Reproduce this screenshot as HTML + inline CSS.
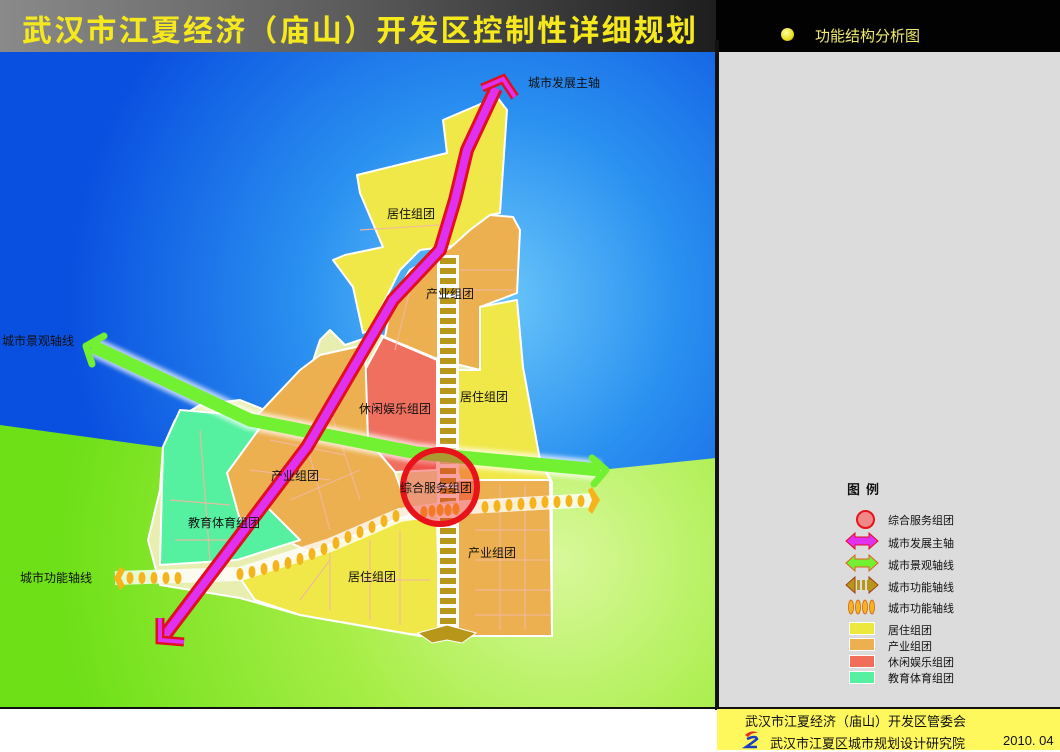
<!DOCTYPE html>
<html><head><meta charset="utf-8"><style>
*{margin:0;padding:0}
body{width:1060px;height:750px;overflow:hidden;background:#fff;font-family:"Liberation Sans","Noto Sans CJK SC",sans-serif;position:relative}
.hdr{position:absolute;left:0;top:0;width:716px;height:52px;background:linear-gradient(90deg,#8a8a8a,#5a5a5a 50%,#1e1e1e)}
.hdr2{position:absolute;left:716px;top:0;width:344px;height:52px;background:#020202}
.title{position:absolute;left:22px;top:8px;font-size:30px;font-weight:bold;color:#f5e81c;letter-spacing:2.2px;white-space:nowrap;font-family:"Noto Sans CJK SC",sans-serif;line-height:40px}
.panel{position:absolute;left:719px;top:52px;width:341px;height:656px;background:#dcdcdc}
.vline{position:absolute;left:715px;top:40px;width:4px;height:670px;background:#111}
.foot{position:absolute;left:717px;top:709px;width:343px;height:41px;background:#fff85c}
.hline{position:absolute;left:0;top:707px;width:1060px;height:2px;background:#111}
.t{position:absolute;white-space:nowrap;color:#111}
.lg{position:absolute;left:888px;font-size:11px;color:#111;white-space:nowrap}
.sw{position:absolute;left:849px;width:24px;height:11px;border:1px solid #fff}
</style></head><body>
<div class="hdr"></div><div class="hdr2"></div>
<div class="title">武汉市江夏经济（庙山）开发区控制性详细规划</div>
<div style="position:absolute;left:781px;top:28px;width:13px;height:13px;border-radius:50%;background:radial-gradient(circle at 40% 35%,#ffffa0,#e8e020 60%,#a09000)"></div>
<div class="t" style="left:815px;top:25px;font-size:15px;color:#f0ea70">功能结构分析图</div>

<svg style="position:absolute;left:0;top:52px" width="716" height="656" viewBox="0 52 716 656">
<defs>
<radialGradient id="sky" cx="490" cy="300" r="420" gradientUnits="userSpaceOnUse">
<stop offset="0" stop-color="#6cc8fa"/><stop offset="0.45" stop-color="#2a90f0"/><stop offset="1" stop-color="#0a50e0"/></radialGradient>
<radialGradient id="grass" cx="560" cy="560" r="500" gradientUnits="userSpaceOnUse">
<stop offset="0" stop-color="#d8f89a"/><stop offset="0.45" stop-color="#a8ee48"/><stop offset="1" stop-color="#6ee018"/></radialGradient>
<filter id="gl"><feGaussianBlur stdDeviation="2"/></filter>
</defs>
<rect x="0" y="52" width="716" height="656" fill="url(#sky)"/>
<path d="M0,425 L160,447 L330,455 L560,466 L600,470 L716,458 L716,708 L0,708Z" fill="url(#grass)"/>
<g stroke="#fff" stroke-width="2" stroke-linejoin="round">
<path d="M163,447 L175,420 L200,405 L240,400 L265,410 L300,400 L320,340 L330,330 L345,345 L360,340 L380,335 L440,355 L520,370 L540,460 L552,482 L552,636 L420,636 L300,615 L240,598 L160,585 L148,540 L160,490Z" fill="#e8eeb0"/>
<path d="M443,120 L497,97 L507,110 L500,213 L490,215 L470,230 L458,245 L420,250 L400,270 L385,300 L370,330 L363,333 L353,287 L333,260 L345,255 L383,247 L360,193 L357,175 L447,153Z" fill="#f0e848"/>
<path d="M490,215 L513,217 L520,230 L517,293 L480,307 L480,370 L440,360 L385,337 L392,300 L410,270 L450,248 L470,230Z" fill="#ecb050"/>
<path d="M480,307 L517,300 L523,367 L540,460 L550,480 L460,480 L455,460 L455,370 L480,370Z" fill="#f0e848"/>
<path d="M383,337 L437,360 L437,470 L395,472 L368,440 L355,400 L365,370Z" fill="#f07060"/>
<path d="M227,473 L250,423 L300,370 L320,355 L365,345 L368,440 L395,472 L410,515 L313,553 L240,520 L227,495Z" fill="#ecb050"/>
<path d="M163,447 L180,410 L240,415 L262,425 L227,473 L240,520 L267,507 L300,540 L237,560 L160,565Z" fill="#55f0a0"/>
<path d="M240,578 L330,545 L400,518 L437,520 L440,636 L410,634 L300,615 L255,600Z" fill="#f0e848"/>
<path d="M455,480 L550,480 L552,636 L457,636 L455,525Z" fill="#ecb050"/>
</g>
<g stroke="#f2b8a0" stroke-width="1.2" fill="none" opacity="0.9">
<path d="M475,500 H550 M475,530 H550 M475,560 H550 M475,590 H550 M475,615 H550 M500,485 V630 M525,485 V630"/>
<path d="M250,470 L330,480 M270,440 L345,455 M290,500 L360,470 M300,420 L330,530 M330,410 L360,500"/>
<path d="M300,600 L330,560 M330,610 V550 M370,620 V540 M400,625 V530 M360,580 H430"/>
<path d="M395,350 L410,290 M360,230 L440,225 M460,270 H515 M460,290 H515"/>
<path d="M170,500 L230,505 M175,540 H230 M200,430 L210,560"/>
</g>
<g>
<rect x="437" y="255" width="22" height="385" fill="#fff"/>
<g fill="#b8961a">
<rect x="440" y="258" width="16" height="6"/><rect x="440" y="268" width="16" height="6"/><rect x="440" y="278" width="16" height="6"/><rect x="440" y="288" width="16" height="6"/><rect x="440" y="298" width="16" height="6"/><rect x="440" y="308" width="16" height="6"/><rect x="440" y="318" width="16" height="6"/><rect x="440" y="328" width="16" height="6"/><rect x="440" y="338" width="16" height="6"/><rect x="440" y="348" width="16" height="6"/><rect x="440" y="358" width="16" height="6"/><rect x="440" y="368" width="16" height="6"/><rect x="440" y="378" width="16" height="6"/><rect x="440" y="388" width="16" height="6"/><rect x="440" y="398" width="16" height="6"/><rect x="440" y="408" width="16" height="6"/><rect x="440" y="418" width="16" height="6"/><rect x="440" y="428" width="16" height="6"/><rect x="440" y="438" width="16" height="6"/><rect x="440" y="448" width="16" height="6"/><rect x="440" y="458" width="16" height="6"/><rect x="440" y="468" width="16" height="6"/><rect x="440" y="478" width="16" height="6"/><rect x="440" y="488" width="16" height="6"/><rect x="440" y="498" width="16" height="6"/><rect x="440" y="508" width="16" height="6"/><rect x="440" y="518" width="16" height="6"/><rect x="440" y="528" width="16" height="6"/><rect x="440" y="538" width="16" height="6"/><rect x="440" y="548" width="16" height="6"/><rect x="440" y="558" width="16" height="6"/><rect x="440" y="568" width="16" height="6"/><rect x="440" y="578" width="16" height="6"/><rect x="440" y="588" width="16" height="6"/><rect x="440" y="598" width="16" height="6"/><rect x="440" y="608" width="16" height="6"/><rect x="440" y="618" width="16" height="6"/>
</g>
<path d="M418,633 L447,625 L476,633 L462,643 L447,640 L432,643Z" fill="#b8961a" stroke="#fff" stroke-width="1"/>
</g>
<path d="M92,346 L250,420 L417,453 L600,470" stroke="#fff" stroke-width="20" fill="none" opacity="0.7" filter="url(#gl)"/>
<path d="M92,346 L250,420 L417,453 L600,470" stroke="#72f032" stroke-width="13" fill="none"/>
<path d="M86,346 L104,336 M86,346 L92,364" stroke="#72f032" stroke-width="7" stroke-linecap="round"/>
<path d="M606,470 L592,458 M606,470 L594,484" stroke="#72f032" stroke-width="7" stroke-linecap="round"/>
<path d="M115,578 L240,574 L330,545 L400,515 L450,508 L595,500" stroke="#fff" stroke-width="14" fill="none" opacity="0.8"/>
<g fill="#f5b41c">
<ellipse cx="130" cy="578" rx="3.5" ry="6"/><ellipse cx="142" cy="578" rx="3.5" ry="6"/><ellipse cx="154" cy="578" rx="3.5" ry="6"/><ellipse cx="166" cy="578" rx="3.5" ry="6"/><ellipse cx="178" cy="578" rx="3.5" ry="6"/>
<ellipse cx="240" cy="574" rx="3.5" ry="6"/><ellipse cx="252" cy="572" rx="3.5" ry="6"/><ellipse cx="264" cy="569" rx="3.5" ry="6"/><ellipse cx="276" cy="566" rx="3.5" ry="6"/><ellipse cx="288" cy="563" rx="3.5" ry="6"/><ellipse cx="300" cy="559" rx="3.5" ry="6"/><ellipse cx="312" cy="554" rx="3.5" ry="6"/><ellipse cx="324" cy="549" rx="3.5" ry="6"/><ellipse cx="336" cy="543" rx="3.5" ry="6"/><ellipse cx="348" cy="537" rx="3.5" ry="6"/><ellipse cx="360" cy="532" rx="3.5" ry="6"/><ellipse cx="372" cy="527" rx="3.5" ry="6"/><ellipse cx="384" cy="521" rx="3.5" ry="6"/><ellipse cx="396" cy="516" rx="3.5" ry="6"/>
<ellipse cx="424" cy="512" rx="3.5" ry="6"/><ellipse cx="432" cy="511" rx="3.5" ry="6"/><ellipse cx="440" cy="510" rx="3.5" ry="6"/><ellipse cx="448" cy="510" rx="3.5" ry="6"/><ellipse cx="456" cy="509" rx="3.5" ry="6"/>
<ellipse cx="485" cy="507" rx="3.5" ry="6"/><ellipse cx="497" cy="506" rx="3.5" ry="6"/><ellipse cx="509" cy="505" rx="3.5" ry="6"/><ellipse cx="521" cy="504" rx="3.5" ry="6"/><ellipse cx="533" cy="503" rx="3.5" ry="6"/><ellipse cx="545" cy="502" rx="3.5" ry="6"/><ellipse cx="557" cy="502" rx="3.5" ry="6"/><ellipse cx="569" cy="501" rx="3.5" ry="6"/><ellipse cx="581" cy="501" rx="3.5" ry="6"/>
<path d="M120,567 L114,578 L120,590 L125,586 L121,578 L125,570Z"/>
<path d="M592,487 L600,500 L592,514 L588,510 L592,500 L588,490Z"/>
</g>
<path d="M165,635 L307,447 L393,300 L440,250 L455,200 L467,150 L496,88" stroke="#e01020" stroke-width="14" fill="none" stroke-linejoin="round"/>
<path d="M165,635 L307,447 L393,300 L440,250 L455,200 L467,150 L496,88" stroke="#e030f0" stroke-width="8" fill="none" stroke-linejoin="round"/>
<path d="M160,618 L160,640 L184,642" stroke="#e01020" stroke-width="9" fill="none" stroke-linejoin="miter"/>
<path d="M160,618 L160,640 L184,642" stroke="#e030f0" stroke-width="4" fill="none" stroke-linejoin="miter"/>
<path d="M482,88 L503,79 L515,97" stroke="#e01020" stroke-width="9" fill="none" stroke-linejoin="miter"/>
<path d="M482,88 L503,79 L515,97" stroke="#e030f0" stroke-width="4" fill="none" stroke-linejoin="miter"/>
<circle cx="440" cy="487" r="37" fill="#f03030" fill-opacity="0.45" stroke="#e8121a" stroke-width="6"/>
<g font-family="Liberation Sans,Noto Sans CJK SC,sans-serif" font-size="12" fill="#111">
<text x="528" y="87">城市发展主轴</text>
<text x="387" y="218">居住组团</text>
<text x="426" y="298">产业组团</text>
<text x="2" y="345">城市景观轴线</text>
<text x="460" y="401">居住组团</text>
<text x="359" y="413">休闲娱乐组团</text>
<text x="271" y="480">产业组团</text>
<text x="400" y="492">综合服务组团</text>
<text x="188" y="527">教育体育组团</text>
<text x="468" y="557">产业组团</text>
<text x="20" y="582">城市功能轴线</text>
<text x="348" y="581">居住组团</text>
</g>
</svg>

<div class="panel"></div>
<div class="vline"></div>
<div class="hline"></div>
<div class="foot"></div>

<div class="t" style="left:847px;top:479px;font-size:13px;font-weight:bold;letter-spacing:6px">图例</div>
<div style="position:absolute;left:856px;top:510px;width:15px;height:15px;border-radius:50%;background:#f08888;border:2px solid #e8121a"></div>
<svg style="position:absolute;left:845px;top:532px" width="36" height="90">
<path d="M1,9 L10,1 V5 H24 V1 L33,9 L24,17 V13 H10 V17Z" fill="#e030f0" stroke="#e01020" stroke-width="1"/>
<path d="M1,31 L10,23 V27 H24 V23 L33,31 L24,39 V35 H10 V39Z" fill="#72f032" stroke="#e06020" stroke-width="1"/>
<path d="M1,53 L10,45 V61Z M33,53 L24,45 V61Z" fill="#b8961a" stroke="#a04010" stroke-width="1"/>
<rect x="12" y="48" width="3" height="10" fill="#b8961a"/><rect x="17" y="48" width="3" height="10" fill="#b8961a"/><rect x="22" y="48" width="3" height="10" fill="#b8961a"/>
<g fill="#f5b41c" stroke="#d06010" stroke-width="0.8"><ellipse cx="6" cy="75" rx="2.5" ry="7"/><ellipse cx="13" cy="75" rx="2.5" ry="7"/><ellipse cx="20" cy="75" rx="2.5" ry="7"/><ellipse cx="27" cy="75" rx="2.5" ry="7"/></g>
</svg>
<div class="sw" style="top:622px;background:#ece83c"></div>
<div class="sw" style="top:638px;background:#ecb050"></div>
<div class="sw" style="top:655px;background:#f06e5a"></div>
<div class="sw" style="top:671px;background:#55f0a0"></div>
<div class="lg" style="top:512px">综合服务组团</div>
<div class="lg" style="top:535px">城市发展主轴</div>
<div class="lg" style="top:557px">城市景观轴线</div>
<div class="lg" style="top:579px">城市功能轴线</div>
<div class="lg" style="top:600px">城市功能轴线</div>
<div class="lg" style="top:622px">居住组团</div>
<div class="lg" style="top:638px">产业组团</div>
<div class="lg" style="top:654px">休闲娱乐组团</div>
<div class="lg" style="top:670px">教育体育组团</div>

<div class="t" style="left:745px;top:711px;font-size:13px">武汉市江夏经济（庙山）开发区管委会</div>
<svg style="position:absolute;left:742px;top:729px" width="20" height="21"><path d="M3,6 Q10,0 16,4 Q10,3 6,8Z" fill="#e83020"/><path d="M5,10 Q14,6 15,10 Q10,14 4,18 H15" stroke="#1a40c0" stroke-width="2.5" fill="none"/></svg>
<div class="t" style="left:770px;top:733px;font-size:13px">武汉市江夏区城市规划设计研究院</div>
<div class="t" style="left:1003px;top:733px;font-size:13px">2010. 04</div>
</body></html>
